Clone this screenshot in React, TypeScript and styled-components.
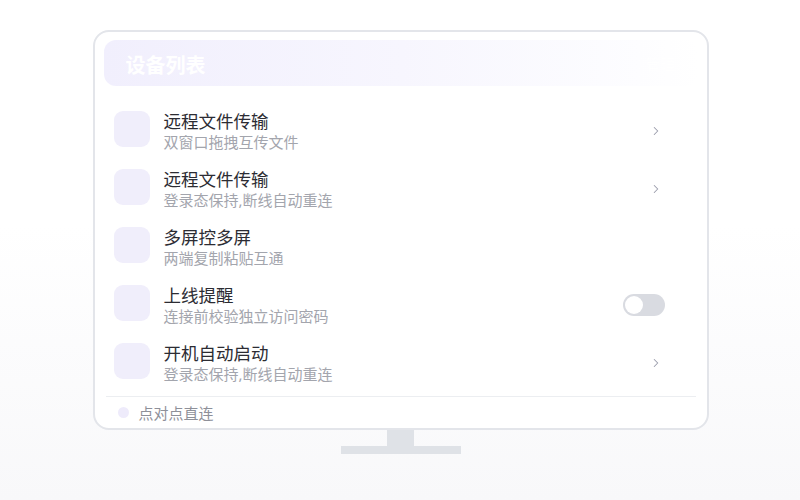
import styled, { createGlobalStyle } from 'styled-components';
import { ChevronRight } from 'lucide-react';

const GlobalStyle = createGlobalStyle`
    html, body {
        margin: 0;
        padding: 0;
    }
    body {
        font-family: "Noto Sans", "Noto Sans CJK SC", sans-serif;
    }
`;

const Page = styled.div`
    width: 800px;
    height: 500px;
    display: flex;
    flex-direction: column;
    align-items: center;
    padding-top: 30px;
    padding-left: 1px;
    box-sizing: border-box;
    background: linear-gradient(180deg, #ffffff 45%, #f8f8fa 100%);
`;

const Monitor = styled.div`
    width: 616px;
    height: 400px;
    box-sizing: border-box;
    border: 2px solid #e3e5ea;
    border-radius: 16px;
    background-color: #fff;
    padding: 8px 9px 0;
    display: flex;
    flex-direction: column;
`;

const Header = styled.div`
    height: 46px;
    flex-shrink: 0;
    border-radius: 12px;
    background: linear-gradient(90deg, #f1effd 0%, #f7f6fe 50%, #fdfdff 90%, #fff 100%);
    display: flex;
    align-items: center;
    justify-content: space-between;
    padding: 0 22px;
`;

const HeaderTitle = styled.span`
    color: #fff;
    font-size: 20px;
    font-weight: 700;
    margin-top: 2px;
`;

const HeaderAction = styled.span`
    color: #fff;
    font-size: 15px;
`;

const List = styled.div`
    margin-top: 16px;
    display: flex;
    flex-direction: column;
`;

const Row = styled.div`
    height: 58px;
    display: flex;
    align-items: center;
    padding: 0 33px 0 10px;
    gap: 14px;
`;

const IconBox = styled.div`
    width: 36px;
    height: 36px;
    border-radius: 9px;
    background-color: #f0eefb;
    flex-shrink: 0;
    margin-top: -4px;
`;

const Texts = styled.div`
    flex: 1;
    display: flex;
    flex-direction: column;
`;

const Title = styled.span`
    font-size: 17.5px;
    line-height: 22px;
    color: #2c2c33;
`;

const Sub = styled.span`
    font-size: 15px;
    line-height: 20px;
    color: #a3a5ad;
`;

const Chevron = styled.div`
    width: 18px;
    display: flex;
    justify-content: center;
    color: #9a9cab;
`;

const Toggle = styled.div<{ $on?: boolean }>`
    width: 42px;
    height: 22px;
    border-radius: 11px;
    background-color: ${p => (p.$on ? '#8b7cf6' : '#d9dbe1')};
    display: flex;
    align-items: center;
    justify-content: ${p => (p.$on ? 'flex-end' : 'flex-start')};
    padding: 0 2px;
    box-sizing: border-box;
`;

const Knob = styled.div`
    width: 18px;
    height: 18px;
    border-radius: 50%;
    background-color: #fff;
`;

const Divider = styled.div`
    height: 1px;
    margin: 4px 2px 0;
    background-color: #eceef1;
`;

const Footer = styled.div`
    flex: 1;
    display: flex;
    align-items: center;
    gap: 10px;
    padding-left: 14px;
`;

const Dot = styled.div`
    width: 11px;
    height: 11px;
    border-radius: 50%;
    background-color: #eeebfb;
`;

const FooterText = styled.span`
    font-size: 15px;
    color: #8e9099;
`;

const Neck = styled.div`
    width: 27px;
    height: 16px;
    background-color: #dfe2e7;
`;

const Base = styled.div`
    width: 120px;
    height: 8px;
    background-color: #dfe2e7;
`;

type Item = {
    title: string;
    sub: string;
    action: 'chevron' | 'toggle' | 'none';
};

const items: Item[] = [
    { title: '远程文件传输', sub: '双窗口拖拽互传文件', action: 'chevron' },
    { title: '远程文件传输', sub: '登录态保持,断线自动重连', action: 'chevron' },
    { title: '多屏控多屏', sub: '两端复制粘贴互通', action: 'none' },
    { title: '上线提醒', sub: '连接前校验独立访问密码', action: 'toggle' },
    { title: '开机自动启动', sub: '登录态保持,断线自动重连', action: 'chevron' },
];

const App = () => {
    return (
        <Page>
            <GlobalStyle />
            <Monitor>
                <Header>
                    <HeaderTitle>设备列表</HeaderTitle>
                    <HeaderAction>管理</HeaderAction>
                </Header>
                <List>
                    {items.map((it, i) => (
                        <Row key={i}>
                            <IconBox />
                            <Texts>
                                <Title>{it.title}</Title>
                                <Sub>{it.sub}</Sub>
                            </Texts>
                            {it.action === 'chevron' && (
                                <Chevron>
                                    <ChevronRight size={14} strokeWidth={1.8} />
                                </Chevron>
                            )}
                            {it.action === 'toggle' && (
                                <Toggle>
                                    <Knob />
                                </Toggle>
                            )}
                        </Row>
                    ))}
                </List>
                <Divider />
                <Footer>
                    <Dot />
                    <FooterText>点对点直连</FooterText>
                </Footer>
            </Monitor>
            <Neck />
            <Base />
        </Page>
    );
};

export default App;
